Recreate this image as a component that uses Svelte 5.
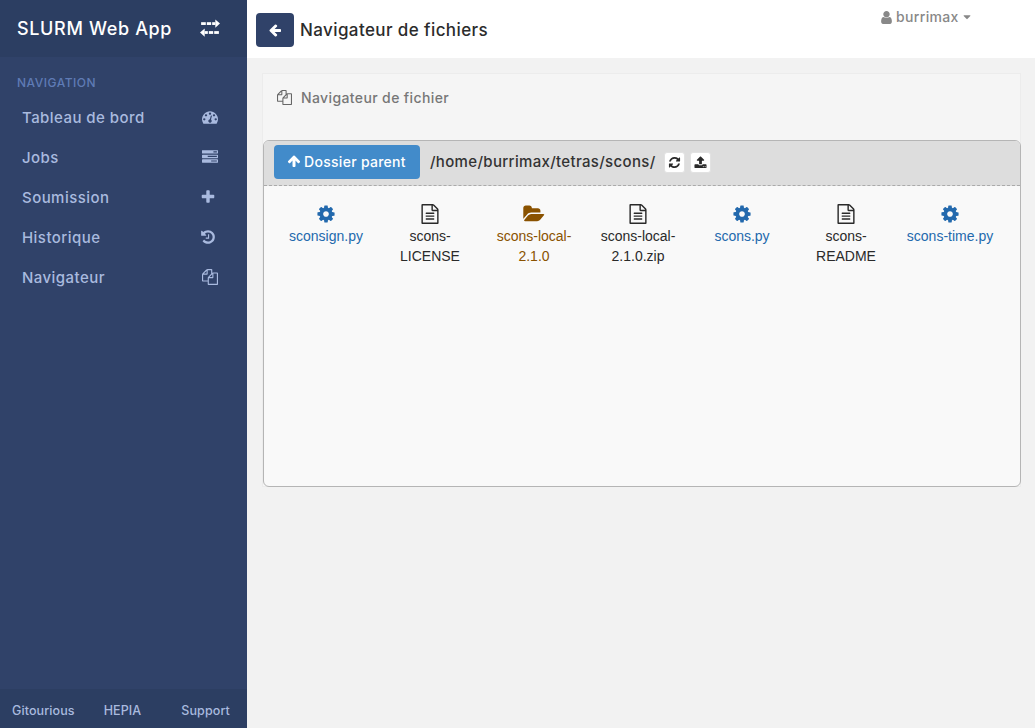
<script>
  const I = {
    cog: "M1152 896q0-106-75-181t-181-75-181 75-75 181 75 181 181 75 181-75 75-181zm512-109v222q0 12-8 23t-20 13l-185 28q-19 54-39 91 35 50 107 138 10 12 10 25t-9 23q-27 37-99 108t-94 71q-12 0-26-9l-138-108q-44 23-91 38-16 136-29 186-7 28-36 28h-222q-14 0-24.5-8.5t-11.5-21.5l-28-184q-49-16-90-37l-141 107q-10 9-25 9-14 0-25-11-126-114-165-168-7-10-7-23 0-12 8-23 15-21 51-66.5t54-70.5q-27-50-41-99l-183-27q-13-2-21-12.5t-8-23.5v-222q0-12 8-23t19-13l186-28q14-46 39-92-40-57-107-138-10-12-10-24 0-10 9-23 26-36 98.5-107.5t94.5-71.5q13 0 26 10l138 107q44-23 91-38 16-136 29-186 7-28 36-28h222q14 0 24.5 8.5t11.5 21.5l28 184q49 16 90 37l142-107q9-9 24-9 13 0 25 10 129 119 165 170 7 8 7 22 0 12-8 23-15 21-51 66.5t-54 70.5q26 50 41 98l183 28q13 2 21 12.5t8 23.5z",
    file: "M1596 380q28 28 48 76t20 88v1152q0 40-28 68t-68 28h-1344q-40 0-68-28t-28-68v-1600q0-40 28-68t68-28h896q40 0 88 20t76 48zm-444-244v376h376q-10-29-22-41l-313-313q-12-12-41-22zm384 1528v-1024h-416q-40 0-68-28t-28-68v-416h-768v1536h1280zm-1024-864q0-14 9-23t23-9h704q14 0 23 9t9 23v64q0 14-9 23t-23 9h-704q-14 0-23-9t-9-23v-64zm736 224q14 0 23 9t9 23v64q0 14-9 23t-23 9h-704q-14 0-23-9t-9-23v-64q0-14 9-23t23-9h704zm0 256q14 0 23 9t9 23v64q0 14-9 23t-23 9h-704q-14 0-23-9t-9-23v-64q0-14 9-23t23-9h704z",
    folder: "M1815 952q0 31-31 66l-336 396q-43 51-120.5 86.5t-143.5 35.5h-1088q-34 0-60.5-13t-26.5-43q0-31 31-66l336-396q43-51 120.5-86.5t143.5-35.5h1088q34 0 60.5 13t26.5 43zm-343-344v160h-832q-94 0-197 47.5t-164 119.5l-337 396-5 6q0-4-.5-12.5t-.5-12.5v-960q0-92 66-158t158-66h320q92 0 158 66t66 158v32h544q92 0 158 66t66 158z",
    files: "M1696 384q40 0 68 28t28 68v1216q0 40-28 68t-68 28h-960q-40 0-68-28t-28-68v-288h-544q-40 0-68-28t-28-68v-672q0-40 20-88t48-76l408-408q28-28 76-48t88-20h416q40 0 68 28t28 68v328q68-40 128-40h416zm-544 213l-299 299h299v-299zm-640-384l-299 299h299v-299zm196 647l316-316v-416h-384v416q0 40-28 68t-68 28h-416v640h512v-256q0-40 20-88t48-76zm956 804v-1152h-384v416q0 40-28 68t-68 28h-416v640h896z",
    left: "M1664 896v128q0 53-32.5 90.5t-84.5 37.5h-704l293 294q38 36 38 90t-38 90l-75 76q-37 37-90 37-52 0-91-37l-651-652q-37-37-37-90 0-52 37-91l651-650q38-38 91-38 52 0 90 38l75 74q38 38 38 91t-38 91l-293 293h704q52 0 84.5 37.5t32.5 90.5z",
    up: "M1675 971q0 51-37 90l-75 75q-38 38-91 38-54 0-90-38l-294-293v704q0 52-37.5 84.5t-90.5 32.5h-128q-53 0-90.5-32.5t-37.5-84.5v-704l-294 293q-36 38-90 38t-90-38l-75-75q-38-38-38-90 0-53 38-91l651-651q35-37 90-37 54 0 91 37l651 651q37 39 37 91z",
    refresh: "M1639 1056q0 5-1 7-64 268-268 434.5t-478 166.5q-146 0-282.5-55t-243.5-157l-129 129q-19 19-45 19t-45-19-19-45v-448q0-26 19-45t45-19h448q26 0 45 19t19 45-19 45l-137 137q71 66 161 102t187 36q134 0 250-65t186-179q11-17 53-117 8-23 30-23h192q13 0 22.5 9.5t9.5 22.5zm25-800v448q0 26-19 45t-45 19h-448q-26 0-45-19t-19-45 19-45l138-138q-148-137-349-137-134 0-250 65t-186 179q-11 17-53 117-8 23-30 23h-199q-13 0-22.5-9.5t-9.5-22.5v-7q65-268 270-434.5t480-166.5q146 0 284 55.5t245 156.5l130-129q19-19 45-19t45 19 19 45z",
    upload: "M1344 1472q0-26-19-45t-45-19-45 19-19 45 19 45 45 19 45-19 19-45zm256 0q0-26-19-45t-45-19-45 19-19 45 19 45 45 19 45-19 19-45zm128-224v320q0 40-28 68t-68 28h-1472q-40 0-68-28t-28-68v-320q0-40 28-68t68-28h427q21 56 70.5 92t110.5 36h256q61 0 110.5-36t70.5-92h427q40 0 68 28t28 68zm-325-648q-17 40-59 40h-256v448q0 26-19 45t-45 19h-256q-26 0-45-19t-19-45v-448h-256q-42 0-59-40-17-39 14-69l448-448q18-19 45-19t45 19l448 448q31 30 14 69z",
    user: "M1536 1399q0 109-62.5 187t-150.5 78h-854q-88 0-150.5-78t-62.5-187q0-85 8.5-160.5t31.5-152 58.5-131 94-89 134.5-34.5q131 128 313 128t313-128q76 0 134.5 34.5t94 89 58.5 131 31.5 152 8.5 160.5zm-256-887q0 159-112.5 271.5t-271.5 112.5-271.5-112.5-112.5-271.5 112.5-271.5 271.5-112.5 271.5 112.5 112.5 271.5z",
    caret: "M1408 704q0 26-19 45l-448 448q-19 19-45 19t-45-19l-448-448q-19-19-19-45t19-45 45-19h896q26 0 45 19t19 45z",
    dash: "M384 1152q0-53-37.5-90.5t-90.5-37.5-90.5 37.5-37.5 90.5 37.5 90.5 90.5 37.5 90.5-37.5 37.5-90.5zm192-448q0-53-37.5-90.5t-90.5-37.5-90.5 37.5-37.5 90.5 37.5 90.5 90.5 37.5 90.5-37.5 37.5-90.5zm428 481l101-382q6-26-7.5-48.5t-38.5-29.5-48 6.5-30 39.5l-101 382q-60 5-107 43.5t-63 98.5q-20 77 20 146t117 89 146-20 89-117q16-60-6-117t-72-91zm660-33q0-53-37.5-90.5t-90.5-37.5-90.5 37.5-37.5 90.5 37.5 90.5 90.5 37.5 90.5-37.5 37.5-90.5zm-640-640q0-53-37.5-90.5t-90.5-37.5-90.5 37.5-37.5 90.5 37.5 90.5 90.5 37.5 90.5-37.5 37.5-90.5zm448 192q0-53-37.5-90.5t-90.5-37.5-90.5 37.5-37.5 90.5 37.5 90.5 90.5 37.5 90.5-37.5 37.5-90.5zm320 448q0 261-141 483-19 29-54 29h-1402q-35 0-54-29-141-221-141-483 0-182 71-348t191-286 286-191 348-71 348 71 286 191 191 286 71 348z",
    tasks: "M1024 1408h640v-128h-640v128zm-384-512h1024v-128h-1024v128zm640-512h384v-128h-384v128zm512 832v256q0 26-19 45t-45 19h-1664q-26 0-45-19t-19-45v-256q0-26 19-45t45-19h1664q26 0 45 19t19 45zm0-512v256q0 26-19 45t-45 19h-1664q-26 0-45-19t-19-45v-256q0-26 19-45t45-19h1664q26 0 45 19t19 45zm0-512v256q0 26-19 45t-45 19h-1664q-26 0-45-19t-19-45v-256q0-26 19-45t45-19h1664q26 0 45 19t19 45z",
    plus: "M1600 736v192q0 40-28 68t-68 28h-416v416q0 40-28 68t-68 28h-192q-40 0-68-28t-28-68v-416h-416q-40 0-68-28t-28-68v-192q0-40 28-68t68-28h416v-416q0-40 28-68t68-28h192q40 0 68 28t28 68v416h416q40 0 68 28t28 68z",
    history: "M1664 896q0 156-61 298t-164 245-245 164-298 61q-172 0-327-72.5t-264-204.5q-7-10-6.5-22.5t8.5-20.5l137-138q10-9 25-9 16 2 23 12 73 95 179 147t225 52q104 0 198.5-40.5t163.5-109.5 109.5-163.5 40.5-198.5-40.5-198.5-109.5-163.5-163.5-109.5-198.5-40.5q-98 0-188 35.5t-160 101.5l137 138q31 30 14 69-17 40-59 40h-448q-26 0-45-19t-19-45v-448q0-42 40-59 39-17 69 14l130 129q107-101 244.5-156.5t284.5-55.5q156 0 298 61t245 164 164 245 61 298zm-640-288v448q0 14-9 23t-23 9h-320q-14 0-23-9t-9-23v-64q0-14 9-23t23-9h224v-352q0-14 9-23t23-9h64q14 0 23 9t9 23z"
  };
  const nav = [
    ["Tableau de bord", "dash", "nav-ico"],
    ["Jobs", "tasks", "nav-ico"],
    ["Soumission", "plus", "nav-ico narrow"],
    ["Historique", "history", "nav-ico narrow"],
    ["Navigateur", "files", "nav-ico"]
  ];
  const files = [
    ["sconsign.py", "cog", "py"],
    ["scons-LICENSE", "file", "doc"],
    ["scons-local-2.1.0", "folder", "dir"],
    ["scons-local-2.1.0.zip", "file", "doc"],
    ["scons.py", "cog", "py"],
    ["scons-README", "file", "doc"],
    ["scons-time.py", "cog", "py"]
  ];
</script>

{#snippet icon(name, cls)}
  <svg class={cls} viewBox="0 0 1792 1792" aria-hidden="true"><path d={I[name]} fill="currentColor" /></svg>
{/snippet}

<div class="page">
  <aside class="side">
    <div class="brand">
      <span>SLURM Web App</span>
      <svg class="brand-ico" viewBox="0 0 1792 1792" aria-hidden="true">
        <g fill="currentColor">
          <path d="M1792 500L1370 130v740z" />
          <path d="M0 1300l422 370V930z" />
          <rect x="100" y="375" width="420" height="250" />
          <rect x="610" y="375" width="390" height="250" />
          <rect x="1090" y="375" width="290" height="250" />
          <rect x="1272" y="1175" width="420" height="250" />
          <rect x="792" y="1175" width="390" height="250" />
          <rect x="412" y="1175" width="290" height="250" />
        </g>
      </svg>
    </div>
    <div class="navlabel">NAVIGATION</div>
    <nav class="nav">
      {#each nav as [label, ic, cls]}
        <a class="navitem" href="#top"><span>{label}</span>{@render icon(ic, cls)}</a>
      {/each}
    </nav>
    <footer class="foot">
      <a href="#top">Gitourious</a>
      <a class="hepia" href="#top">HEPIA</a>
      <a class="support" href="#top">Support</a>
    </footer>
  </aside>

  <main class="main">
    <header class="top">
      <button class="back">{@render icon("left", "back-ico")}</button>
      <h1>Navigateur de fichiers</h1>
      <div class="user">
        {@render icon("user", "user-ico")}
        <span>burrimax</span>
        {@render icon("caret", "caret-ico")}
      </div>
    </header>

    <section class="panel">
      <div class="panel-head">
        {@render icon("files", "head-ico")}
        <span>Navigateur de fichier</span>
      </div>
      <div class="browser">
        <div class="toolbar">
          <button class="parent">{@render icon("up", "up-ico")}Dossier parent</button>
          <span class="path">/home/burrimax/tetras/scons/</span>
          <button class="mini">{@render icon("refresh", "mini-ico")}</button>
          <button class="mini">{@render icon("upload", "mini-ico")}</button>
        </div>
        <div class="grid">
          {#each files as [name, ic, kind]}
            <div class="item {kind}">
              {@render icon(ic, "file-ico")}
              <div class="fname">{name}</div>
            </div>
          {/each}
        </div>
      </div>
    </section>
  </main>
</div>

<style>
  :global(body) {
    margin: 0;
    background: #f2f2f2;
  }
  svg {
    overflow: visible;
    flex: none;
  }
  .page {
    display: flex;
    height: 728px;
    overflow: hidden;
    font-family: Inter, "Liberation Sans", sans-serif;
  }
  .side {
    width: 247px;
    flex: none;
    background: #304269;
    display: flex;
    flex-direction: column;
    color: #a9badf;
  }
  .brand {
    height: 57px;
    background: #2c3e62;
    display: flex;
    align-items: center;
    justify-content: space-between;
    padding: 0 27px 1px 17px;
    box-sizing: border-box;
    color: #fff;
    font-size: 18px;
    font-weight: 500;
    letter-spacing: 0.65px;
  }
  .brand-ico {
    width: 20px;
    height: 20px;
  }
  .navlabel {
    margin: 18px 0 0 17px;
    font-size: 12px;
    line-height: 16px;
    font-weight: 500;
    letter-spacing: 0.5px;
    color: #5f7bb5;
  }
  .nav {
    display: flex;
    flex-direction: column;
    margin-top: 6px;
  }
  .navitem {
    height: 40px;
    display: flex;
    align-items: center;
    justify-content: space-between;
    padding: 0 29px 0 22px;
    color: inherit;
    text-decoration: none;
    font-size: 15px;
    font-weight: 500;
    letter-spacing: 0.45px;
  }
  .nav-ico {
    width: 16px;
    height: 16px;
  }
  .narrow {
    transform: translateX(-2px);
  }
  .foot {
    margin-top: auto;
    height: 39px;
    background: #2c3e62;
    display: flex;
    align-items: center;
    padding: 3px 0 0 12px;
    box-sizing: border-box;
    font-size: 12.5px;
    font-weight: 500;
    letter-spacing: 0.1px;
  }
  .foot a {
    color: #a9badf;
    text-decoration: none;
  }
  .foot .hepia {
    margin-left: 29px;
  }
  .foot .support {
    margin-left: 40px;
  }
  .main {
    flex: 1;
    min-width: 0;
    display: flex;
    flex-direction: column;
  }
  .top {
    height: 58px;
    background: #fff;
    display: flex;
    align-items: center;
    padding-left: 9px;
    box-sizing: border-box;
    position: relative;
    flex: none;
  }
  .back {
    width: 38px;
    height: 34px;
    margin-top: 2px;
    border: 0;
    border-radius: 4px;
    background: #304269;
    color: #fff;
    padding: 0;
    display: flex;
    align-items: center;
    justify-content: center;
  }
  .back-ico {
    width: 14px;
    height: 14px;
  }
  h1 {
    margin: 2px 0 0 6px;
    font-size: 17px;
    font-weight: 500;
    letter-spacing: 0.4px;
    color: #2c2c2c;
  }
  .user {
    position: absolute;
    top: 8px;
    left: 632px;
    display: flex;
    align-items: center;
    gap: 2px;
    color: #888;
    font-size: 14px;
    font-weight: 500;
    line-height: 18px;
    letter-spacing: 0.35px;
  }
  .user-ico {
    width: 15px;
    height: 15px;
  }
  .caret-ico {
    width: 12px;
    height: 12px;
  }
  .panel {
    margin: 15px 14px 0 15px;
    background: #f5f5f5;
    border: 1px solid #ececec;
    height: 414px;
    box-sizing: border-box;
    display: flex;
    flex-direction: column;
  }
  .panel-head {
    height: 66px;
    flex: none;
    display: flex;
    align-items: flex-start;
    padding: 15px 0 0 14px;
    box-sizing: border-box;
    gap: 9px;
    color: #777;
    font-size: 14px;
    font-weight: 500;
    line-height: 17px;
    letter-spacing: 0.38px;
  }
  .head-ico {
    width: 15px;
    height: 15px;
    margin-top: 1px;
    color: #666;
  }
  .browser {
    flex: 1;
    border: 1px solid #b5b5b5;
    border-radius: 6px;
    background: #f9f9f9;
    overflow: hidden;
    margin-right: -1px;
    margin-bottom: -1px;
  }
  .toolbar {
    height: 45px;
    box-sizing: border-box;
    background: #ddd;
    border-bottom: 1px dashed #aaa;
    display: flex;
    align-items: center;
    padding: 0 0 2px 10px;
  }
  .parent {
    height: 34px;
    width: 146px;
    border: 0;
    border-radius: 4px;
    background: #428bca;
    color: #fff;
    font: 500 14px Inter, "Liberation Sans", sans-serif;
    letter-spacing: 0.28px;
    display: flex;
    align-items: center;
    justify-content: center;
    gap: 3px;
    padding: 0 1px 2px 0;
  }
  .up-ico {
    width: 14px;
    height: 14px;
  }
  .path {
    margin: -2px 8px 0 10px;
    font-size: 15px;
    font-weight: 500;
    letter-spacing: 0.33px;
    color: #333;
    white-space: nowrap;
  }
  .mini {
    width: 21px;
    height: 21px;
    border: 1px solid #e2e2e2;
    background: #fff;
    border-radius: 3px;
    margin-right: 5px;
    padding: 0;
    display: flex;
    align-items: center;
    justify-content: center;
    color: #2a2a2a;
    flex: none;
  }
  .mini-ico {
    width: 13px;
    height: 13px;
  }
  .grid {
    display: flex;
    padding: 18px 0 0 10px;
  }
  .item {
    width: 104px;
    flex: none;
    display: flex;
    flex-direction: column;
    align-items: center;
    font: 14px/20px "Liberation Sans", Arial, sans-serif;
    text-align: center;
  }
  .file-ico {
    width: 20px;
    height: 20px;
  }
  .fname {
    width: 90px;
    margin-top: 2px;
    overflow-wrap: break-word;
  }
  .py {
    color: #2369ad;
  }
  .doc {
    color: #2a2a2a;
  }
  .dir {
    color: #8a5200;
  }
</style>
